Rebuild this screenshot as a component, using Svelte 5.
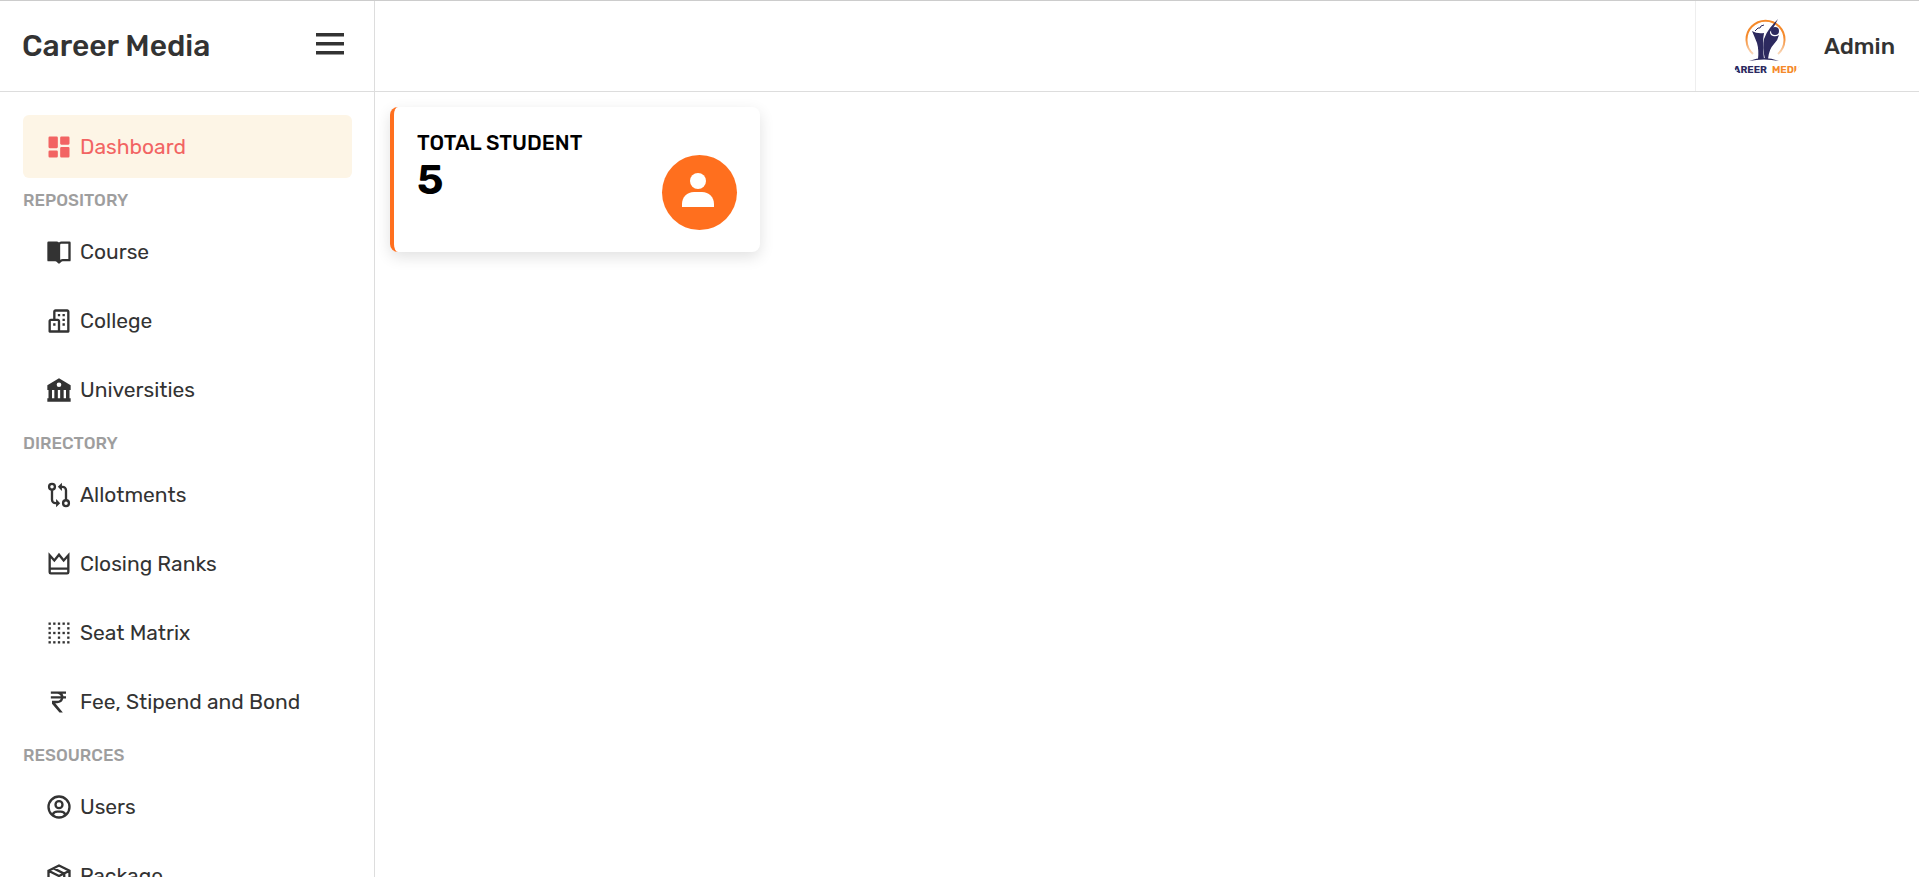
<script lang="ts">
	const sections = [
		{
			title: '',
			items: [{ label: 'Dashboard', icon: 'dashboard', active: true }]
		},
		{
			title: 'Repository',
			items: [
				{ label: 'Course', icon: 'book' },
				{ label: 'College', icon: 'buildings' },
				{ label: 'Universities', icon: 'bank' }
			]
		},
		{
			title: 'Directory',
			items: [
				{ label: 'Allotments', icon: 'compare' },
				{ label: 'Closing Ranks', icon: 'crown' },
				{ label: 'Seat Matrix', icon: 'matrix' },
				{ label: 'Fee, Stipend and Bond', icon: 'rupee' }
			]
		},
		{
			title: 'Resources',
			items: [
				{ label: 'Users', icon: 'user' },
				{ label: 'Package', icon: 'package' }
			]
		}
	];

	const dots = [3, 7, 11, 15, 19];

	let open = $state(true);
	let totalStudent = $state(5);
</script>

{#snippet icon(name: string)}
	<svg class="icon" viewBox="0 0 24 24" aria-hidden="true">
		{#if name === 'dashboard'}
			<path d="M4 13h6a1 1 0 0 0 1-1V4a1 1 0 0 0-1-1H4a1 1 0 0 0-1 1v8a1 1 0 0 0 1 1zm-1 7a1 1 0 0 0 1 1h6a1 1 0 0 0 1-1v-4a1 1 0 0 0-1-1H4a1 1 0 0 0-1 1v4zm10 0a1 1 0 0 0 1 1h6a1 1 0 0 0 1-1v-7a1 1 0 0 0-1-1h-6a1 1 0 0 0-1 1v7zm1-10h6a1 1 0 0 0 1-1V4a1 1 0 0 0-1-1h-6a1 1 0 0 0-1 1v5a1 1 0 0 0 1 1z" />
		{:else if name === 'book'}
			<path d="M21 3h-7a2.98 2.98 0 0 0-2 .78A2.98 2.98 0 0 0 10 3H3a1 1 0 0 0-1 1v15a1 1 0 0 0 1 1h5.758c.526 0 1.042.214 1.414.586l1.121 1.121a1 1 0 0 0 1.414 0l1.121-1.121A2.015 2.015 0 0 1 15.242 20H21a1 1 0 0 0 1-1V4a1 1 0 0 0-1-1zm-1 15h-4.758a4.03 4.03 0 0 0-2.242.689V6c0-.551.448-1 1-1h6v13z" />
		{:else if name === 'buildings'}
			<path d="M19 2H9c-1.103 0-2 .897-2 2v6H5c-1.103 0-2 .897-2 2v9a1 1 0 0 0 1 1h16a1 1 0 0 0 1-1V4c0-1.103-.897-2-2-2zM5 12h6v8H5v-8zm14 8h-6v-8c0-1.103-.897-2-2-2H9V4h10v16z" />
			<path d="M11 6h2v2h-2zm4 0h2v2h-2zm0 4h2v2h-2zm0 4h2v2h-2zm-8 0h2v2H7z" />
		{:else if name === 'bank'}
			<path fill-rule="evenodd" d="M2 8v4h1v7H2v3h20v-3h-1v-7h1V8L12 2 2 8zm4 11v-7h2v7H6zm5 0v-7h2v7h-2zm7 0h-2v-7h2v7zM12 5.500a2 2 0 1 1 0 4 2 2 0 0 1 0-4z" />
		{:else if name === 'compare'}
			<g class="line">
				<circle cx="6" cy="5" r="2.500" />
				<circle cx="18" cy="19" r="2.500" />
				<path d="M6 8v8a3 3 0 0 0 3 3h1M18 16V8a3 3 0 0 0-3-3h-1" />
			</g>
			<path d="M9.500 15.500 13 19l-3.500 3.500zM14.500 1.500 11 5l3.500 3.500z" />
		{:else if name === 'crown'}
			<path class="line" d="M4 4.500V19a1 1 0 0 0 1 1h14a1 1 0 0 0 1-1V4.500L16 9l-4-5-4 5zM4 16h16" />
		{:else if name === 'matrix'}
			{#each dots as y, row}
				{#each dots as x, col}
					{#if row % 2 === 0 || col % 2 === 0}
						<rect {x} {y} width="2" height="2" />
					{/if}
				{/each}
			{/each}
		{:else if name === 'rupee'}
			<path d="M18 5V3H5v2h5.500c1.400 0 2.600.800 3.100 2H5v2h8.600c-.500 1.200-1.700 2-3.100 2H6v2.400L12.400 21h2.900l-6.500-8h1.700a5.500 5.500 0 0 0 5.200-4H18V7h-2.200a5 5 0 0 0-.900-2z" />
		{:else if name === 'user'}
			<g class="line">
				<circle cx="12" cy="12" r="9" />
				<circle cx="12" cy="10" r="3" />
				<path d="M6.700 18.500c.500-1.700 1.800-2.500 3.800-2.500h3c2 0 3.300.800 3.800 2.500" />
			</g>
		{:else if name === 'package'}
			<path class="line" d="M3 7.500 12 3l9 4.500v9L12 21l-9-4.500zM3 7.500l9 4.500 9-4.500M12 12v9M7.500 5.500l9 4.500v4" />
		{/if}
	</svg>
{/snippet}

<div class="layout">
	<aside class="sidebar" class:closed={!open}>
		<div class="brand">
			<h1>Career Media</h1>
			<button type="button" class="toggle" aria-label="Toggle menu" onclick={() => (open = !open)}>
				<svg viewBox="0 0 28 22" aria-hidden="true">
					<path d="M0 0h28v3.500H0zM0 9h28v3.500H0zM0 18h28v3.500H0z" />
				</svg>
			</button>
		</div>

		<nav>
			{#each sections as section}
				{#if section.title}
					<h2>{section.title}</h2>
				{/if}
				{#each section.items as item}
					<a href="#{item.icon}" class:active={item.active}>
						{@render icon(item.icon)}
						{item.label}
					</a>
				{/each}
			{/each}
		</nav>
	</aside>

	<div class="content">
		<header>
			<div class="profile">
				<svg class="logo" viewBox="0 0 80 80" role="img" aria-label="Career Media">
					<defs>
						<clipPath id="round"><circle cx="40" cy="40" r="39" /></clipPath>
						<linearGradient id="ring" x1="0" y1="0" x2="0" y2="1">
							<stop offset="0.5" stop-color="#f58a2c" />
							<stop offset="1" stop-color="#f9d9bd" />
						</linearGradient>
					</defs>
					<g clip-path="url(#round)">
						<path d="M27 48A19 19 0 1 1 52 48" fill="none" stroke="url(#ring)" stroke-width="2" />
						<path class="navy" d="M26 25q5 3 12 2-1 5-1 11 0 8 1 15h-6q1-9-1-16-2-5-5-12z" />
						<path class="navy" d="M52 13q-3 7-8 13 0 3 3 4 3 1 6-1-1 5-5 9-5 5-6 15h-3q-3-12-1-20 2-6 6-11 4-5 8-9z" />
						<circle class="navy" cx="49" cy="25" r="4" />
						<path d="M29 25l3-3 2 0 1-2 3-1" fill="none" stroke="#2d2a5f" />
						<path class="navy" d="M23 55q15-6 30 0-15-3-30 0z" />
						<text class="navy" x="41" y="67" text-anchor="end">CAREER</text>
						<text fill="#f58a2c" x="46" y="67">MEDIA</text>
					</g>
				</svg>
				<span>Admin</span>
			</div>
		</header>

		<main>
			<section class="card">
				<div>
					<h3>Total Student</h3>
					<p>{totalStudent}</p>
				</div>
				<div class="badge">
					<svg viewBox="0 0 32 34" aria-hidden="true">
						<circle cx="16" cy="8" r="8" />
						<path d="M0 34v-3c0-7 5-12 12-12h8c7 0 12 5 12 12v3z" />
					</svg>
				</div>
			</section>
		</main>
	</div>
</div>

<style>
	:global(body) {
		background-color: #fff;
		color: #333;
		font-family: Rubik, Inter, sans-serif;
	}

	h1,
	h2,
	h3,
	p {
		margin: 0;
	}

	.layout {
		display: flex;
		height: 100vh;
		box-sizing: border-box;
		border-top: 1px solid #ccc;
		overflow: hidden;
	}

	.sidebar {
		flex: none;
		width: 374px;
		border-right: 1px solid #ddd;
		overflow: hidden;
	}

	.sidebar.closed {
		width: 80px;
	}

	.brand {
		display: flex;
		align-items: center;
		justify-content: space-between;
		height: 90px;
		padding: 0 30px 0 22px;
		border-bottom: 1px solid #ddd;
	}

	.brand h1 {
		font-size: 30px;
		font-weight: 500;
	}

	.toggle {
		padding: 0 0 4px;
		border: none;
		background: transparent;
		cursor: pointer;
	}

	.toggle svg {
		display: block;
		width: 28px;
		height: 22px;
		fill: #333;
	}

	nav {
		display: flex;
		flex-direction: column;
		gap: 6px;
		padding: 23px 22px 23px 23px;
	}

	nav h2 {
		padding-top: 2px;
		font-size: 17px;
		line-height: 28px;
		font-weight: 500;
		text-transform: uppercase;
		color: #9e9e9e;
	}

	nav a {
		display: flex;
		align-items: center;
		gap: 7px;
		height: 63px;
		padding: 0 22px;
		border-radius: 6px;
		font-size: 21px;
		color: #333;
		text-decoration: none;
		white-space: nowrap;
	}

	nav a.active {
		background-color: #fdf5e6;
		color: #f26463;
	}

	.icon {
		flex: none;
		width: 28px;
		height: 28px;
		fill: currentColor;
	}

	.line {
		fill: none;
		stroke: currentColor;
		stroke-width: 2;
	}

	.content {
		flex: 1;
		min-width: 0;
	}

	header {
		display: flex;
		justify-content: flex-end;
		height: 90px;
		border-bottom: 1px solid #ddd;
	}

	.profile {
		display: flex;
		align-items: center;
		gap: 18px;
		padding: 0 24px 0 30px;
		border-left: 1px solid #eee;
		font-size: 23px;
		font-weight: 500;
	}

	.logo {
		width: 80px;
		height: 80px;
	}

	.logo text {
		font-size: 10px;
		font-weight: 700;
	}

	.navy {
		fill: #2d2a5f;
	}

	main {
		padding: 15px;
	}

	.card {
		display: flex;
		justify-content: space-between;
		box-sizing: border-box;
		max-width: 370px;
		min-height: 145px;
		padding: 23px 23px 22px;
		border-left: 4px solid #ff6f1e;
		border-radius: 8px;
		box-shadow: 0 5px 15px rgba(0, 0, 0, 0.12);
		color: #000;
	}

	.card h3 {
		font-size: 21px;
		line-height: 26px;
		font-weight: 500;
		text-transform: uppercase;
	}

	.card p {
		font-size: 42px;
		line-height: 48px;
		font-weight: 600;
	}

	.badge {
		display: flex;
		align-items: center;
		justify-content: center;
		align-self: flex-end;
		box-sizing: border-box;
		width: 75px;
		height: 75px;
		padding: 0 3px 5px 0;
		border-radius: 50%;
		background-color: #ff6f1e;
	}

	.badge svg {
		width: 32px;
		height: 34px;
		fill: #fff;
	}
</style>
